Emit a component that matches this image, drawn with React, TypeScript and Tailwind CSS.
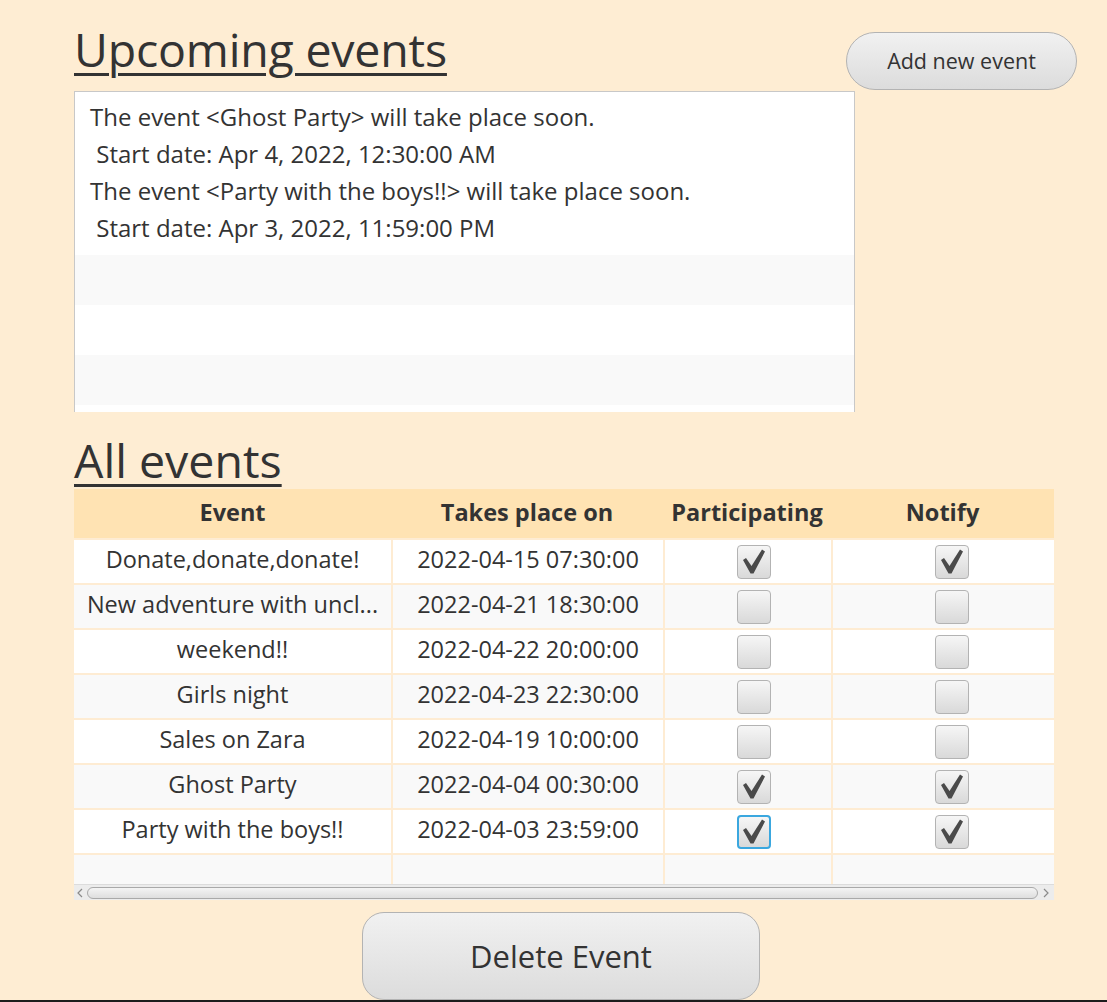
import React from "react";

type Row = { name: string; date: string; part: boolean; notify: boolean; focus?: boolean };

const rows: Row[] = [
  { name: "Donate,donate,donate!", date: "2022-04-15 07:30:00", part: true, notify: true },
  { name: "New adventure with uncl...", date: "2022-04-21 18:30:00", part: false, notify: false },
  { name: "weekend!!", date: "2022-04-22 20:00:00", part: false, notify: false },
  { name: "Girls night", date: "2022-04-23 22:30:00", part: false, notify: false },
  { name: "Sales on Zara", date: "2022-04-19 10:00:00", part: false, notify: false },
  { name: "Ghost Party", date: "2022-04-04 00:30:00", part: true, notify: true },
  { name: "Party with the boys!!", date: "2022-04-03 23:59:00", part: true, notify: true, focus: true },
];

function CheckBox({ checked, focus }: { checked: boolean; focus?: boolean }) {
  return (
    <div
      className={
        "relative w-[34px] h-[34px] rounded-[4px] bg-gradient-to-b from-[#f6f6f6] to-[#d9d9d9] " +
        (focus ? "border-2 border-[#3aa7df]" : "border border-[#b3b3b3]")
      }
    >
      {checked && (
        <svg
          className={"absolute " + (focus ? "left-[-2px] top-[-2px]" : "left-[-1px] top-[-1px]")}
          width="34"
          height="34"
          viewBox="0 0 34 34"
        >
          <polygon points="6,15 9,13 14.5,21 25,4.5 28,6.5 16.5,28.5 13.5,28.5" fill="#4a4a4a" />
        </svg>
      )}
    </div>
  );
}

export default function App() {
  return (
    <div
      className="w-[1107px] h-[1002px] bg-[#feedd3] text-[#333] relative overflow-hidden border-b-2 border-[#1c1c1c]"
      style={{ fontFamily: '"Open Sans", "Noto Sans", sans-serif' }}
    >
      <div className="pl-[74px]">
        {/* Upcoming events header */}
        <div className="flex h-[91px] w-[1003px]">
          <h1 className="pt-[23px] text-[46.5px] leading-[52px] underline underline-offset-[6px] decoration-[3px] tracking-[-0.2px]">
            Upcoming events
          </h1>
          <button className="ml-auto mt-[32px] w-[231px] h-[58px] rounded-full border border-[#b3b3b3] bg-gradient-to-b from-[#f1f1f1] to-[#dcdcdc] text-[21.5px] text-[#333]">
            Add new event
          </button>
        </div>

        {/* Upcoming list */}
        <div className="w-[781px] h-[321px] border-l border-t border-r border-[#c8c8c8] bg-white overflow-hidden">
          <div className="h-[163px] pt-[6px] pl-[15px] text-[24px] leading-[37px] whitespace-pre">
            <div>The event &lt;Ghost Party&gt; will take place soon.</div>
            <div> Start date: Apr 4, 2022, 12:30:00 AM</div>
            <div>The event &lt;Party with the boys!!&gt; will take place soon.</div>
            <div> Start date: Apr 3, 2022, 11:59:00 PM</div>
          </div>
          <div className="h-[50px] bg-[#f9f9f9]" />
          <div className="h-[50px] bg-white" />
          <div className="h-[50px] bg-[#f9f9f9]" />
        </div>

        {/* All events */}
        <h2 className="mt-[22px] mb-[3px] text-[46.5px] leading-[52px] underline underline-offset-[6px] decoration-[3px] w-fit">
          All events
        </h2>

        <div className="w-[980px]">
          <div className="grid grid-cols-[317px_272px_168px_223px] h-[49px] bg-[#ffe3b3] text-[23.5px] font-bold items-center text-center pb-[2px]">
            <div>Event</div>
            <div>Takes place on</div>
            <div>Participating</div>
            <div>Notify</div>
          </div>
          {rows.map((r, i) => (
            <div
              key={i}
              className={
                "grid grid-cols-[317px_272px_168px_223px] h-[45px] border-t-2 border-[#feecd3] text-[23.5px] " +
                (i % 2 === 0 ? "bg-white" : "bg-[#f9f9f9]")
              }
            >
              <div className="flex items-center justify-center whitespace-nowrap overflow-hidden pb-[4px]">{r.name}</div>
              <div className="flex items-center justify-center border-l-2 border-[#feecd3] pb-[4px]">{r.date}</div>
              <div className="flex items-center justify-center border-l-2 border-[#feecd3] pl-[12px]">
                <CheckBox checked={r.part} focus={r.focus} />
              </div>
              <div className="flex items-center justify-center border-l-2 border-[#feecd3] pl-[16px]">
                <CheckBox checked={r.notify} />
              </div>
            </div>
          ))}
          <div className="grid grid-cols-[317px_272px_168px_223px] h-[31px] border-t-2 border-[#feecd3] bg-[#f9f9f9]">
            <div />
            <div className="border-l-2 border-[#feecd3]" />
            <div className="border-l-2 border-[#feecd3]" />
            <div className="border-l-2 border-[#feecd3]" />
          </div>

          {/* Horizontal scrollbar */}
          <div className="h-[16px] bg-[#ececec] border-t border-[#dcdcdc] flex items-center">
            <svg width="13" height="14" viewBox="0 0 13 14" className="shrink-0">
              <polyline points="8,3 4,7 8,11" fill="none" stroke="#8a8a8a" strokeWidth="1.2" />
            </svg>
            <div className="flex-1 h-[12px] rounded-full border border-[#a9a9a9] bg-gradient-to-b from-[#f4f4f4] to-[#dedede]" />
            <svg width="16" height="14" viewBox="0 0 16 14" className="shrink-0">
              <polyline points="6,3 10,7 6,11" fill="none" stroke="#8a8a8a" strokeWidth="1.2" />
            </svg>
          </div>
        </div>

        {/* Delete button */}
        <div className="w-[980px] flex pt-[12px]">
          <button className="ml-[288px] w-[398px] h-[88px] rounded-[22px] border border-[#b3b3b3] bg-gradient-to-b from-[#f1f1f1] to-[#dcdcdc] text-[31px] text-[#333]">
            Delete Event
          </button>
        </div>
      </div>
    </div>
  );
}
